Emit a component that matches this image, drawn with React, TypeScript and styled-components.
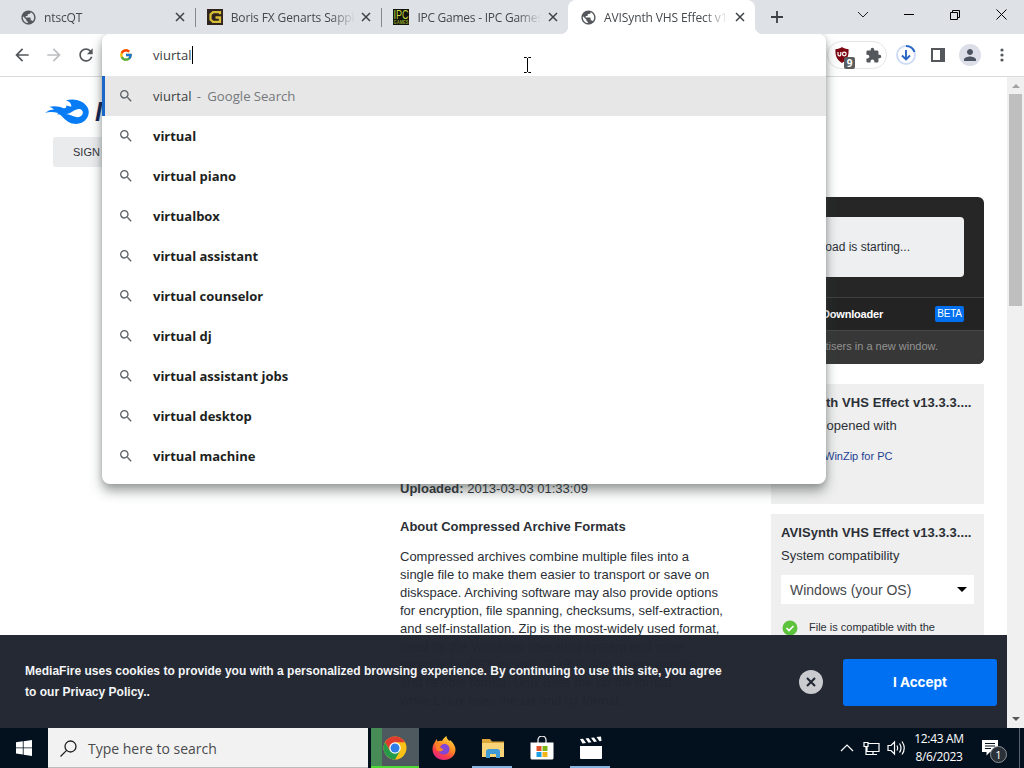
import React from "react";
import styled, { createGlobalStyle, css } from "styled-components";
import { FcGoogle } from "react-icons/fc";
import {
    MdArrowBack,
    MdArrowForward,
    MdExtension,
    MdPerson,
    MdPublic,
    MdRefresh,
    MdSearch,
} from "react-icons/md";

const uiFont = `"Open Sans", "Noto Sans", sans-serif`;
const pageFont = `"Liberation Sans", Arial, sans-serif`;

const GlobalStyle = createGlobalStyle`
    * {
        box-sizing: border-box;
    }

    body {
        margin: 0;
        overflow: hidden;
    }

    p, h2, h3 {
        margin: 0;
    }

    svg {
        flex-shrink: 0;
    }
`;

const Desktop = styled.div`
    position: relative;
    display: flex;
    flex-direction: column;
    width: 1024px;
    height: 768px;
    overflow: hidden;
    background: #fff;
    font-family: ${uiFont};
`;

/* Tab strip */

const TabStrip = styled.div`
    display: flex;
    height: 34px;
    padding-left: 8px;
    background: #dee1e6;
`;

const TabItem = styled.div<{ $active?: boolean; $divider?: boolean }>`
    position: relative;
    display: flex;
    align-items: center;
    width: 186.7px;
    height: 34px;
    padding: 0 7px 0 12px;
    color: #45494d;

    ${(props) =>
        props.$active &&
        css`
            border-radius: 8px 8px 0 0;
            background: #fff;

            &::before,
            &::after {
                content: "";
                position: absolute;
                bottom: 0;
                width: 8px;
                height: 8px;
            }

            &::before {
                left: -8px;
                background: radial-gradient(circle at 0 0, transparent 8px, #fff 8.5px);
            }

            &::after {
                right: -8px;
                background: radial-gradient(circle at 100% 0, transparent 8px, #fff 8.5px);
            }
        `}

    ${(props) =>
        props.$divider &&
        css`
            &::after {
                content: "";
                position: absolute;
                right: -1px;
                top: 8px;
                width: 1px;
                height: 19px;
                background: #85898e;
            }
        `}
`;

const TabTitle = styled.span<{ $spacing?: number }>`
    flex: 1;
    margin-left: 8px;
    overflow: hidden;
    white-space: nowrap;
    font-size: 12px;
    letter-spacing: ${(props) => props.$spacing ?? -0.12}px;
    mask-image: linear-gradient(to right, #000 100px, transparent 124px);
`;

const Favicon = styled.span`
    display: flex;
    align-items: center;
    justify-content: center;
    width: 16px;
    height: 16px;
    color: #54585c;
`;

const CloseGlyph = styled.svg`
    width: 16px;
    height: 16px;
    stroke: #3f4245;
    stroke-width: 1.5;
`;

const NewTab = styled.div`
    display: flex;
    align-items: center;
    justify-content: center;
    width: 28px;
    margin-left: 8px;
`;

const WindowControls = styled.div`
    display: flex;
    margin-left: auto;
`;

const WindowButton = styled.div`
    display: flex;
    align-items: center;
    justify-content: center;
    width: 46px;
    height: 29px;
`;

/* Toolbar */

const Toolbar = styled.div`
    display: flex;
    align-items: center;
    justify-content: space-between;
    height: 43px;
    padding: 0 6px;
    border-bottom: 1px solid #d9dbdd;
    background: #fff;
`;

const ToolbarGroup = styled.div`
    display: flex;
    align-items: center;
`;

const ToolButton = styled.div<{ $muted?: boolean }>`
    display: flex;
    align-items: center;
    justify-content: center;
    width: 32px;
    height: 32px;
    color: ${(props) => (props.$muted ? "#bcbec1" : "#54585c")};
`;

const ExtensionPill = styled.div`
    position: relative;
    display: flex;
    align-items: center;
    height: 28px;
    margin-right: 3px;
    padding-left: 37px;
    border: 1px solid #e3e5e8;
    border-radius: 14px;
    width: 60px;
`;

const ShieldSlot = styled.div`
    position: absolute;
    left: 6px;
    top: 4px;
`;

const BlockCount = styled.span`
    position: absolute;
    left: 10px;
    top: 11px;
    width: 11px;
    height: 12px;
    border-radius: 2px;
    background: #5a5d60;
    color: #fff;
    font-size: 10px;
    font-weight: 700;
    line-height: 12px;
    text-align: center;
`;

const Avatar = styled.div`
    display: flex;
    align-items: center;
    justify-content: center;
    width: 22px;
    height: 22px;
    border-radius: 50%;
    background: #dcdfe8;
    color: #4c5360;
`;

/* Address bar popup */

const Omnibox = styled.div`
    position: absolute;
    left: 102px;
    top: 34px;
    width: 724px;
    height: 450px;
    border-radius: 8px;
    background: #fff;
    box-shadow: 0 7px 12px rgba(60, 70, 66, 0.5), 0 0 5px rgba(60, 64, 67, 0.2);
    clip-path: inset(0 -20px -30px -20px);
`;

const OmniboxRow = styled.div<{ $selected?: boolean }>`
    display: flex;
    align-items: center;
    height: 40px;
    padding-left: ${(props) => (props.$selected ? 13 : 16)}px;
    border-left: ${(props) => (props.$selected ? "3px solid #1b66c9" : "none")};
    background: ${(props) => (props.$selected ? "#e7e7e7" : "#fff")};
    color: #5f6368;
`;

const OmniboxInput = styled(OmniboxRow)`
    height: 42px;
    padding-left: 17px;
    border-radius: 8px;
`;

const OmniboxText = styled.span<{ $strong?: boolean; $inset?: number }>`
    margin-left: ${(props) => props.$inset ?? 19}px;
    color: ${(props) => (props.$strong ? "#1d1f21" : "#3a3d40")};
    font-size: 13px;
    font-weight: ${(props) => (props.$strong ? 700 : 400)};
    letter-spacing: ${(props) => (props.$strong ? -0.02 : 0.07)}px;
    white-space: nowrap;
`;

const Hint = styled.span`
    margin-left: 5px;
    color: #75787b;
    font-size: 13.2px;
    white-space: pre;
    word-spacing: -0.3px;
`;

const Caret = styled.i`
    width: 1px;
    height: 18px;
    background: #000;
`;

const TextCursor = styled.svg`
    position: absolute;
    left: 523px;
    top: 57px;
`;

/* Web page */

const Viewport = styled.div`
    position: relative;
    display: flex;
    height: 651px;
    overflow: hidden;
    color: #2b2f36;
    font-family: ${pageFont};
`;

const Page = styled.div`
    display: flex;
    flex-direction: column;
    width: 1007px;
    padding-right: 23px;
    overflow: hidden;
`;

const SiteHeader = styled.header`
    flex-shrink: 0;
    height: 120px;
    padding: 19px 0 0 44px;
`;

const Brand = styled.div`
    display: flex;
    align-items: center;
    gap: 4px;
    width: 58px;
    height: 32px;
    overflow: hidden;
    color: #0c1f52;
    font-size: 27px;
    font-style: italic;
    font-weight: 700;
`;

const SignUp = styled.div`
    width: 90px;
    height: 30px;
    margin: 9px 0 0 9px;
    padding-left: 20px;
    border-radius: 3px;
    background: #eaebed;
    color: #2f3338;
    font-size: 11px;
    line-height: 30px;
`;

const DownloadPanel = styled.section`
    flex-shrink: 0;
    align-self: flex-end;
    width: 584px;
    height: 167px;
    overflow: hidden;
    border-radius: 6px;
    background: #262626;
    text-align: right;
`;

const StatusBox = styled.div`
    height: 60px;
    margin: 20px 20px 20px;
    padding-right: 54px;
    border-radius: 4px;
    background: #eeeff0;
    font-size: 12px;
    line-height: 60px;
`;

const DownloaderRow = styled.div`
    display: flex;
    align-items: center;
    justify-content: flex-end;
    gap: 52px;
    height: 33px;
    padding-right: 20px;
    border-top: 1px solid #404040;
    background: #232323;
    color: #fff;
    font-size: 11px;
    font-weight: 700;
    letter-spacing: -0.2px;
`;

const Beta = styled.span`
    width: 29px;
    height: 16px;
    border-radius: 2px;
    background: #0070f0;
    font-size: 10px;
    font-weight: 400;
    line-height: 16px;
    text-align: center;
`;

const AdvertiserNote = styled.div`
    height: 34px;
    padding-right: 46px;
    border-top: 1px solid #484848;
    background: #373737;
    color: #949494;
    font-size: 11px;
    line-height: 31px;
`;

const Columns = styled.div`
    display: grid;
    flex-shrink: 0;
    grid-template-columns: 324px 213px;
    justify-content: end;
    column-gap: 47px;
    margin-top: 20px;
`;

const Article = styled.article`
    padding-top: 96px;
    font-size: 13px;
    line-height: 18px;
`;

const ArticleTitle = styled.h2`
    margin: 20px 0 12px;
    font-size: 13px;
    line-height: 18px;
`;

const Paragraph = styled.p`
    white-space: pre-line;
`;

const Aside = styled.aside`
    display: flex;
    flex-direction: column;
    gap: 10px;
`;

const Card = styled.div`
    height: 120px;
    padding: 10px 10px 9px;
    background: #efefef;
    font-size: 13px;
`;

const CompatCard = styled(Card)`
    height: 220px;
`;

const CardTitle = styled.h3`
    font-size: 13px;
    line-height: 18px;
    letter-spacing: 0.07px;
    white-space: nowrap;
`;

const CardText = styled.p`
    margin-top: 5px;
    line-height: 18px;
`;

const OpenerLink = styled.a`
    display: block;
    margin: 12px 0 0 43px;
    color: #1d3f94;
    font-size: 11px;
    line-height: 18px;
`;

const OsSelect = styled.div`
    display: flex;
    align-items: center;
    justify-content: space-between;
    height: 29px;
    margin-top: 10px;
    padding: 0 7px 0 9px;
    background: #fff;
    color: #45484d;
    font-size: 14px;
`;

const CompatNote = styled.div`
    display: flex;
    gap: 11px;
    margin-top: 14px;
    padding-left: 1px;
    font-size: 11px;
    line-height: 18px;
`;

const Scrollbar = styled.div`
    display: flex;
    flex-direction: column;
    align-items: center;
    width: 17px;
    background: #f0f0f0;
`;

const ScrollArrow = styled.div<{ $down?: boolean }>`
    margin: ${(props) => (props.$down ? "auto 0 7px" : "7px 0 6px")};
    border: solid transparent;
    border-width: ${(props) => (props.$down ? "4px 4px 0" : "0 4px 4px")};
    border-${(props) => (props.$down ? "top" : "bottom")}-color: ${(props) =>
        props.$down ? "#55585b" : "#a3a3a3"};
`;

const ScrollThumb = styled.div`
    width: 13px;
    height: 212px;
    background: #bfbfbf;
`;

const CookieBanner = styled.div`
    position: absolute;
    left: 0;
    bottom: 0;
    display: flex;
    align-items: center;
    width: 1007px;
    height: 93px;
    padding: 1px 10px 0 25px;
    background: rgba(33, 38, 48, 0.985);
    color: #f4f5f7;
`;

const CookieText = styled.p`
    width: 720px;
    margin-right: auto;
    font-size: 12px;
    font-weight: 700;
    letter-spacing: 0.015px;
    line-height: 21px;
    white-space: pre-line;
`;

const Dismiss = styled.div`
    display: flex;
    align-items: center;
    justify-content: center;
    width: 24px;
    height: 24px;
    margin-right: 20px;
    border-radius: 50%;
    background: #c9cbcf;
`;

const Accept = styled.div`
    width: 154px;
    height: 47px;
    border-radius: 3px;
    background: #0070f3;
    color: #fff;
    font-family: Inter, sans-serif;
    font-size: 13.5px;
    font-weight: 700;
    line-height: 46px;
    text-align: center;
`;

/* Taskbar */

const Taskbar = styled.footer`
    display: flex;
    height: 40px;
    background: #03111e;
`;

const StartButton = styled.div`
    display: flex;
    align-items: center;
    justify-content: center;
    width: 48px;
`;

const SearchField = styled.div`
    display: flex;
    align-items: center;
    gap: 11px;
    width: 320px;
    margin-right: 3px;
    padding: 1px 0 0 12px;
    border-bottom: 1px solid #b9bcbe;
    background: #f2f2f2;
    color: #494b4d;
    font-size: 14px;
`;

const TaskItem = styled.div<{ $running?: boolean; $current?: boolean }>`
    position: relative;
    display: flex;
    align-items: center;
    justify-content: center;
    width: ${(props) => (props.$current ? 48 : 49)}px;
    background: ${(props) =>
        props.$current
            ? "linear-gradient(to right, #478b57 11px, #4d585f 11px)"
            : "none"};

    &::after {
        content: "";
        position: absolute;
        bottom: 0;
        left: ${(props) => (props.$current ? 0 : 4)}px;
        right: ${(props) => (props.$current ? 0 : 5)}px;
        height: 2px;
        background: ${(props) =>
            props.$current ? "#4edb35" : props.$running ? "#86b3df" : "none"};
    }
`;

const Tray = styled.div`
    display: flex;
    align-items: center;
    margin-left: auto;
    color: #fff;
`;

const Clock = styled.div`
    width: 66px;
    margin: 0 10px 0 -2px;
    font-size: 12px;
    line-height: 18px;
    text-align: center;
    letter-spacing: -0.35px;
    white-space: nowrap;
`;

const ActionCenter = styled.div`
    position: relative;
    width: 24px;
    height: 24px;
    margin: 5px 13px 0 0;
`;

const NoticeCount = styled.span`
    position: absolute;
    left: 8px;
    top: 7px;
    width: 17px;
    height: 17px;
    border: 1px solid #8e9398;
    border-radius: 50%;
    background: #2b3138;
    font-size: 11px;
    line-height: 15px;
    text-align: center;
`;

const ShowDesktop = styled.div`
    width: 5px;
    height: 40px;
    border-left: 1px solid #5b646c;
`;

function Close() {
    return (
        <CloseGlyph viewBox="0 0 16 16">
            <path d="M4 4l8 8M12 4l-8 8" />
        </CloseGlyph>
    );
}

function GenartsIcon() {
    return (
        <svg width="16" height="16" viewBox="0 0 16 16">
            <rect width="16" height="16" fill="#30231d" />
            <path
                d="M13 5.200V3.200H6L3.500 5.500v5L6 12.800h7V8.500H8.500"
                fill="none"
                stroke="#d5bd35"
                strokeWidth="2.300"
            />
        </svg>
    );
}

function IpcIcon() {
    return (
        <svg width="16" height="16" viewBox="0 0 16 16">
            <rect width="16" height="16" fill="#10140b" />
            <text x="0.500" y="10" textLength="15" lengthAdjust="spacingAndGlyphs" fontFamily="Liberation Sans" fontSize="12" fill="#c5d640">
                IPC
            </text>
            <text x="0.500" y="15.300" textLength="15" lengthAdjust="spacingAndGlyphs" fontFamily="Liberation Sans" fontSize="5" fontWeight="700" fill="#8f9e2c">
                GAMES
            </text>
        </svg>
    );
}

function ShieldIcon() {
    return (
        <svg width="16" height="16" viewBox="0 0 16 16">
            <path d="M8 0c2 1.600 4 2 6.500 2C15 9 13 13 8 16 3 13 1 9 1.500 2 4 2 6 1.600 8 0z" fill="#7d0613" />
            <path d="M4 5v2.500a1.400 1.400 0 0 0 2.800 0V5" fill="none" stroke="#fff" strokeWidth="1.200" />
            <circle cx="10.300" cy="7" r="1.800" fill="none" stroke="#fff" strokeWidth="1.200" />
        </svg>
    );
}

function DownloadIcon() {
    return (
        <svg width="22" height="22" viewBox="0 0 22 22" fill="none">
            <circle cx="11" cy="11" r="9" stroke="#cfdcf3" strokeWidth="2" />
            <path d="M11 2a9 9 0 0 1 8.500 6" stroke="#2a66c4" strokeWidth="2" />
            <path d="M11 6v9M7 11.500l4 4 4-4" stroke="#2a66c4" strokeWidth="1.900" />
        </svg>
    );
}

function FlameLogo() {
    return (
        <svg width="47" height="28" viewBox="0 0 47 28">
            <path
                d="M1 15c3-2.500 6-3.500 9-3.500C8.500 10 7 9.300 5 9c5-1.600 10-.8 14 1 2.500 1 4-.5 3-2.500 2 .3 3.500 1.300 5.500.7C27 5 25 3 22 2.500 27 .8 34 1.300 39 4.500c5 3.500 7 8.500 5 13.500-2.200 5.500-7.500 8.500-14 7.800-6-.7-8.500-4-12-7.300-1.500-1.500-3-2.500-5-2l1.200-1.500C10 14 5 13.500 1 15z"
                fill="#087cf5"
            />
            <path d="M22 16c5.500-.5 7-4 11.500-4.800 3.500-.5 6 1.500 5.200 4.600-1 3-4.500 3.900-7.700 3C28 18 26 16.500 22 16z" fill="#fff" />
        </svg>
    );
}

function ChromeIcon() {
    return (
        <svg width="24" height="24" viewBox="0 0 24 24">
            <circle cx="12" cy="12" r="11.500" fill="#fbc116" />
            <path d="M2.040 6.250A11.500 11.500 0 0 1 21.960 6.250H12L7 14.900z" fill="#e03b2f" />
            <path d="M2.040 6.250A11.500 11.500 0 0 0 12 23.500L17 14.900H7z" fill="#259b4a" />
            <circle cx="12" cy="12" r="5.750" fill="#fff" />
            <circle cx="12" cy="12" r="4.500" fill="#2f7de9" />
        </svg>
    );
}

function FirefoxIcon() {
    return (
        <svg width="24" height="24" viewBox="0 0 24 24">
            <defs>
                <linearGradient id="fox" x1="0.800" y1="0" x2="0.250" y2="1">
                    <stop offset="0" stopColor="#ffe345" />
                    <stop offset="0.450" stopColor="#ff8a22" />
                    <stop offset="0.750" stopColor="#fb3b4c" />
                    <stop offset="1" stopColor="#d9258f" />
                </linearGradient>
            </defs>
            <path
                d="M3 6l1.500-3 1 2.500C7 4.500 8.500 4.500 10 5c1-2 2.500-4 4.500-5 .2 2.500 1.500 3.500 3 5l.5-1c3 2.500 5.500 6 5.500 9.500C23.500 19.500 18.500 24 12 24S.5 19.500.5 13C.5 10 1.500 8 3 6z"
                fill="url(#fox)"
            />
            <path d="M8 10c1-2 3-1.500 4-2 3-.5 6 2 5.500 6-.5 3-3 4.500-5.500 4.500-3 0-5-1.500-5.500-4 2 1 4 .5 5-1-1.500-.5-3-1-3.500-3.500z" fill="#8246d8" />
            <path d="M4 8c2-1.500 4-1 6 .5-1 1-1.500 2-3 2.500 1 2 3 1.500 4.500 2-1.500 3-4.500 3-7 1z" fill="#ff8425" />
        </svg>
    );
}

function FolderIcon() {
    return (
        <svg width="24" height="22" viewBox="0 0 24 22">
            <path d="M1 2h8l2 2.500h12V20H1z" fill="#dda63a" />
            <path d="M1 6h22v14H1z" fill="#f8d377" />
            <path d="M5 21v-7.500L7 12h10l2 1.500V21h-4v-4H9v4z" fill="#3f9bd5" />
        </svg>
    );
}

function StoreIcon() {
    return (
        <svg width="24" height="24" viewBox="0 0 24 24">
            <path d="M8 7V4a4 4 0 0 1 8 0v3" fill="none" stroke="#e8e8e8" strokeWidth="1.300" />
            <path d="M.5 6.500h23V22q0 1.500-1.500 1.500H2Q.5 23.500.5 22z" fill="#fff" />
            <path d="M6.500 10h5v5h-5z" fill="#df5228" />
            <path d="M12.500 10h5v5h-5z" fill="#7cb518" />
            <path d="M6.500 16h5v5h-5z" fill="#1c9fe0" />
            <path d="M12.500 16h5v5h-5z" fill="#f5b51a" />
        </svg>
    );
}

function ClapperIcon() {
    return (
        <svg width="24" height="24" viewBox="0 0 24 24" fill="#fff">
            <path d="M1 10h22v12q0 1-1 1H2q-1 0-1-1z" />
            <path d="M1 3l3-.3L7 7l-3.500.4zM6.500 2.400l3-.3L12.500 6.300l-3 .4zM12 1.700l3-.3L18 5.600l-3 .4zM17.500 1l4.500-.6.500 4.500-2 .3z" />
        </svg>
    );
}

const tabs = [
    { title: "ntscQT", icon: <MdPublic size={17} />, divider: true },
    { title: "Boris FX Genarts Sapphire", icon: <GenartsIcon />, divider: true },
    { title: "IPC Games - IPC Games", icon: <IpcIcon />, spacing: -0.25 },
    { title: "AVISynth VHS Effect v13", icon: <MdPublic size={17} />, active: true },
];

const suggestions = [
    "virtual",
    "virtual piano",
    "virtualbox",
    "virtual assistant",
    "virtual counselor",
    "virtual dj",
    "virtual assistant jobs",
    "virtual desktop",
    "virtual machine",
];

function BrowserTabs() {
    return (
        <TabStrip>
            {tabs.map((tab) => (
                <TabItem key={tab.title} $active={tab.active} $divider={tab.divider}>
                    <Favicon>{tab.icon}</Favicon>
                    <TabTitle $spacing={tab.spacing}>{tab.title}</TabTitle>
                    <Close />
                </TabItem>
            ))}
            <NewTab>
                <svg width="12" height="12" viewBox="0 0 12 12">
                    <path d="M6 0v12M0 6h12" stroke="#3c4043" strokeWidth="1.800" />
                </svg>
            </NewTab>
            <WindowControls>
                <WindowButton>
                    <svg width="12" height="8" viewBox="0 0 12 8">
                        <path d="M1 1l5 5 5-5" fill="none" stroke="#222" />
                    </svg>
                </WindowButton>
                <WindowButton>
                    <svg width="10" height="2">
                        <path d="M0 .5h10" stroke="#000" />
                    </svg>
                </WindowButton>
                <WindowButton>
                    <svg width="10" height="10" fill="none" stroke="#000">
                        <path d="M.5 2.500h7v7h-7zM2.500 2.500v-2h7v7h-2" />
                    </svg>
                </WindowButton>
                <WindowButton>
                    <svg width="11" height="11" stroke="#000">
                        <path d="M.5.5l10 10M10.500.5l-10 10" />
                    </svg>
                </WindowButton>
            </WindowControls>
        </TabStrip>
    );
}

function BrowserToolbar() {
    return (
        <Toolbar>
            <ToolbarGroup>
                <ToolButton>
                    <MdArrowBack size={20} />
                </ToolButton>
                <ToolButton $muted>
                    <MdArrowForward size={20} />
                </ToolButton>
                <ToolButton>
                    <MdRefresh size={20} />
                </ToolButton>
            </ToolbarGroup>
            <ToolbarGroup>
                <ExtensionPill>
                    <ShieldSlot>
                        <ShieldIcon />
                        <BlockCount>9</BlockCount>
                    </ShieldSlot>
                    <MdExtension size={17} color="#54585c" />
                </ExtensionPill>
                <ToolButton>
                    <DownloadIcon />
                </ToolButton>
                <ToolButton>
                    <svg width="14" height="14">
                        <path d="M1 1h12v12H1z" fill="none" stroke="#54585c" strokeWidth="2" />
                        <path d="M9 1h4v12H9z" fill="#54585c" />
                    </svg>
                </ToolButton>
                <ToolButton>
                    <Avatar>
                        <MdPerson size={18} />
                    </Avatar>
                </ToolButton>
                <ToolButton>
                    <svg width="4" height="14" fill="#54585c">
                        <circle cx="2" cy="2" r="1.600" />
                        <circle cx="2" cy="7" r="1.600" />
                        <circle cx="2" cy="12" r="1.600" />
                    </svg>
                </ToolButton>
            </ToolbarGroup>
        </Toolbar>
    );
}

function AddressPopup() {
    return (
        <Omnibox>
            <OmniboxInput>
                <FcGoogle size={14} />
                <OmniboxText $inset={20}>viurtal</OmniboxText>
                <Caret />
            </OmniboxInput>
            <OmniboxRow $selected>
                <MdSearch size={16} />
                <OmniboxText>viurtal</OmniboxText>
                <Hint>-  Google Search</Hint>
            </OmniboxRow>
            {suggestions.map((suggestion) => (
                <OmniboxRow key={suggestion}>
                    <MdSearch size={16} />
                    <OmniboxText $strong>{suggestion}</OmniboxText>
                </OmniboxRow>
            ))}
        </Omnibox>
    );
}

function MediaFirePage() {
    return (
        <Viewport>
            <Page>
                <SiteHeader>
                    <Brand>
                        <FlameLogo />
                        MediaFire
                    </Brand>
                    <SignUp>SIGN UP</SignUp>
                </SiteHeader>
                <DownloadPanel>
                    <StatusBox>Your download is starting...</StatusBox>
                    <DownloaderRow>
                        MediaFire Downloader
                        <Beta>BETA</Beta>
                    </DownloaderRow>
                    <AdvertiserNote>Ads open advertisers in a new window.</AdvertiserNote>
                </DownloadPanel>
                <Columns>
                    <Article>
                        <p>
                            <b>Uploaded:</b> 2013-03-03 01:33:09
                        </p>
                        <ArticleTitle>About Compressed Archive Formats</ArticleTitle>
                        <Paragraph>
                            {`Compressed archives combine multiple files into a
                            single file to make them easier to transport or save on
                            diskspace. Archiving software may also provide options
                            for encryption, file spanning, checksums, self-extraction,
                            and self-installation. Zip is the most-widely used format,
                            used by the Windows operating system and more
                            recently by OSX as well. RAR is also a very popular
                            and flexible format. Unix uses the tar file format,
                            while Linux uses the tar and gz format.`}
                        </Paragraph>
                    </Article>
                    <Aside>
                        <Card>
                            <CardTitle>AVISynth VHS Effect v13.3.3....</CardTitle>
                            <CardText>Can be opened with</CardText>
                            <OpenerLink>WinZip for PC</OpenerLink>
                        </Card>
                        <CompatCard>
                            <CardTitle>AVISynth VHS Effect v13.3.3....</CardTitle>
                            <CardText>System compatibility</CardText>
                            <OsSelect>
                                Windows (your OS)
                                <svg width="10" height="5">
                                    <path d="M0 0h10L5 5z" />
                                </svg>
                            </OsSelect>
                            <CompatNote>
                                <svg width="16" height="18" viewBox="0 0 16 18">
                                    <circle cx="8" cy="10" r="7.500" fill="#5dc23c" />
                                    <path d="M4.500 10l2.500 2.500L11.500 8" fill="none" stroke="#fff" strokeWidth="1.600" />
                                </svg>
                                File is compatible with the
                            </CompatNote>
                        </CompatCard>
                    </Aside>
                </Columns>
            </Page>
            <Scrollbar>
                <ScrollArrow />
                <ScrollThumb />
                <ScrollArrow $down />
            </Scrollbar>
            <CookieBanner>
                <CookieText>
                    {`MediaFire uses cookies to provide you with a personalized browsing experience. By continuing to use this site, you agree
                    to our Privacy Policy..`}
                </CookieText>
                <Dismiss>
                    <svg width="10" height="10">
                        <path d="M1 1l8 8M9 1L1 9" stroke="#1f2530" strokeWidth="2" />
                    </svg>
                </Dismiss>
                <Accept>I Accept</Accept>
            </CookieBanner>
        </Viewport>
    );
}

function WindowsTaskbar() {
    return (
        <Taskbar>
            <StartButton>
                <svg width="16" height="16" viewBox="0 0 16 16" fill="#fff">
                    <path d="M0 2.200l6.800-.9v6.200H0zM7.600 1.200L16 0v7.500H7.600zM0 8.300h6.800v6.200L0 13.600zM7.600 8.300H16V16l-8.400-1.200z" />
                </svg>
            </StartButton>
            <SearchField>
                <svg width="17" height="17" viewBox="0 0 17 17" fill="none" stroke="#222" strokeWidth="1.300">
                    <circle cx="10.500" cy="6.500" r="5.500" />
                    <path d="M6.600 10.400L.5 16.500" />
                </svg>
                Type here to search
            </SearchField>
            <TaskItem $current>
                <ChromeIcon />
            </TaskItem>
            <TaskItem>
                <FirefoxIcon />
            </TaskItem>
            <TaskItem $running>
                <FolderIcon />
            </TaskItem>
            <TaskItem>
                <StoreIcon />
            </TaskItem>
            <TaskItem $running>
                <ClapperIcon />
            </TaskItem>
            <Tray>
                <svg width="72" height="18" viewBox="0 0 72 18" fill="none" stroke="#fff" strokeWidth="1.200">
                    <path d="M5 12l6-6 6 6" />
                    <path d="M32 4.500h11v8H31V8M37 12.500v3M33 15.500h8M28 3.500h4v4h-4zM30 7.500v8h3" />
                    <path d="M52 6.500h3l3.500-3.500v12L55 11.500h-3zM61 6.500q1.500 2.500 0 5M63.500 4.500q3 4.500 0 9M66 2.500q4.500 6.500 0 13" />
                </svg>
                <Clock>
                    12:43 AM
                    <br />
                    8/6/2023
                </Clock>
                <ActionCenter>
                    <svg width="17" height="17" viewBox="0 0 17 17">
                        <path d="M0 1h16v12H8l-3.500 3.500V13H0z" fill="#fff" />
                        <path d="M3 4.500h10M3 7h10M3 9.500h6" stroke="#03111e" />
                    </svg>
                    <NoticeCount>1</NoticeCount>
                </ActionCenter>
                <ShowDesktop />
            </Tray>
        </Taskbar>
    );
}

export default function App() {
    return (
        <Desktop>
            <GlobalStyle />
            <BrowserTabs />
            <BrowserToolbar />
            <MediaFirePage />
            <WindowsTaskbar />
            <AddressPopup />
            <TextCursor width="9" height="16" viewBox="0 0 9 16" fill="none" stroke="#000">
                <path d="M1 .5h2.500l1 1 1-1H8M4.500 1v14M1 15.500h2.500l1-1 1 1H8" />
            </TextCursor>
        </Desktop>
    );
}
